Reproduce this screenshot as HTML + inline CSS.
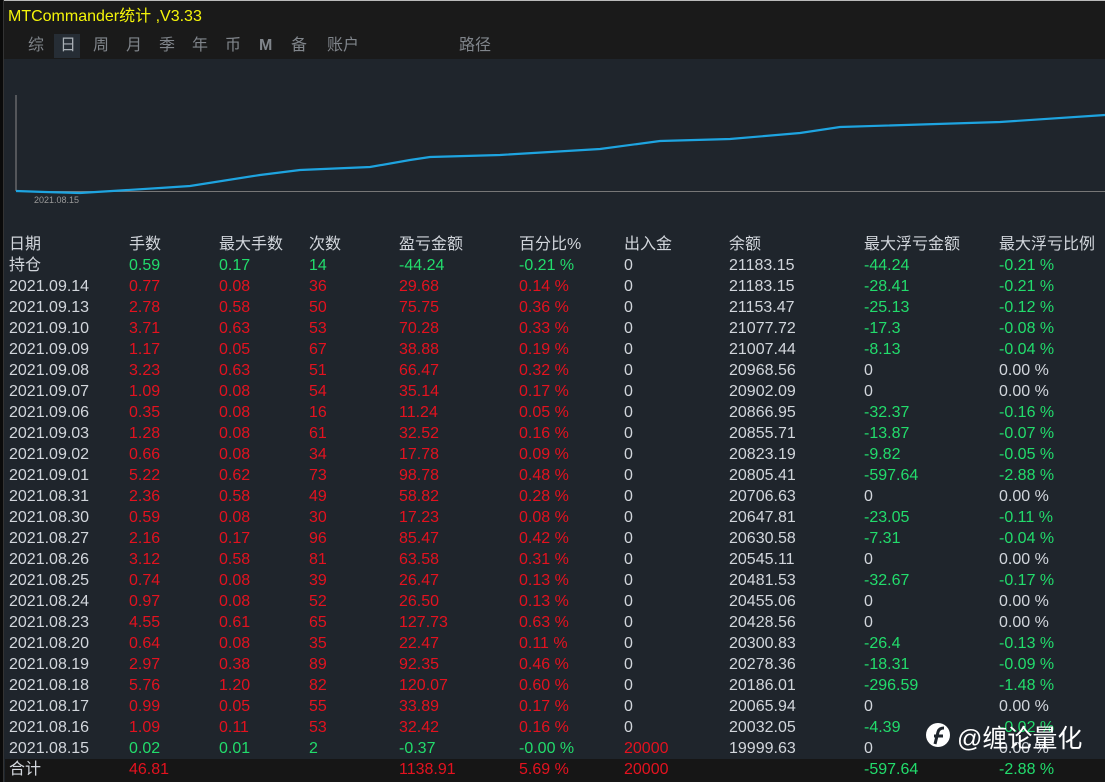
<!DOCTYPE html>
<html><head><meta charset="utf-8"><style>
*{margin:0;padding:0;box-sizing:border-box}
body{width:1105px;height:782px;overflow:hidden;background:#1f252c;font-family:"Liberation Sans","Noto Sans CJK SC",sans-serif;position:relative;color:#d2d6dc}
.top{position:absolute;left:0;top:0;width:1105px;height:59px;background:#1a1a1a;border-top:1px solid #bbb}
.lstrip{position:absolute;left:0;top:0;width:4px;height:782px;background:#0a0a0a;border-right:1px solid #333}
.title{position:absolute;left:8px;top:2px;color:#f5f50a;font-size:16px}
.tab{position:absolute;top:36px;height:20px;line-height:20px;color:#80858b;font-size:16px}
.sel{position:absolute;left:54px;top:34px;width:26px;height:24px;background:#262d35}
.r{position:absolute;left:0;height:21px;width:1105px;font-size:16px;line-height:21px}
.r span{position:absolute;top:0;white-space:nowrap}
.r span:nth-child(1){left:9px}.r span:nth-child(2){left:129px}.r span:nth-child(3){left:219px}.r span:nth-child(4){left:309px}.r span:nth-child(5){left:399px}.r span:nth-child(6){left:519px}.r span:nth-child(7){left:624px}.r span:nth-child(8){left:729px}.r span:nth-child(9){left:864px}.r span:nth-child(10){left:999px}
.R{color:#e3121f}.G{color:#22dc6c}.W{color:#d2d6dc}
.tot{background:#161616}
.wm{position:absolute;left:957px;top:719px;font-size:25px;color:#fff}
</style></head><body>
<div class="top"></div>
<div class="lstrip"></div>
<div class="title">MTCommander统计 ,V3.33</div>
<div class="sel"></div>
<span class="tab" style="left:28px">综</span><span class="tab" style="left:60px;color:#aab0b6">日</span><span class="tab" style="left:93px">周</span><span class="tab" style="left:126px">月</span><span class="tab" style="left:159px">季</span><span class="tab" style="left:192px">年</span><span class="tab" style="left:225px">币</span><span class="tab" style="left:259px;font-weight:bold">M</span><span class="tab" style="left:291px">备</span><span class="tab" style="left:327px">账户</span><span class="tab" style="left:459px">路径</span>
<svg style="position:absolute;left:0;top:0" width="1105" height="220">
<line x1="16" y1="95" x2="16" y2="191" stroke="#888" stroke-width="1"/>
<line x1="16" y1="191.5" x2="1105" y2="191.5" stroke="#777" stroke-width="1"/>
<polyline fill="none" stroke="#1ea4e0" stroke-width="2.2" points="16,191 45,192 80,193 160,188 190,186 260,175 300,170 370,167 410,160 430,157 500,155 600,149 660,141 730,139 800,133 840,127 1000,122 1105,115"/>
<text x="34" y="203" fill="#999" font-size="9" font-family="Liberation Sans">2021.08.15</text>
</svg>
<div class="r" style="top:234px"><span>日期</span><span>手数</span><span>最大手数</span><span>次数</span><span>盈亏金额</span><span>百分比%</span><span>出入金</span><span>余额</span><span>最大浮亏金额</span><span>最大浮亏比例</span></div>
<div class="r" style="top:255px"><span>持仓</span><span class="G">0.59</span><span class="G">0.17</span><span class="G">14</span><span class="G">-44.24</span><span class="G">-0.21 %</span><span>0</span><span>21183.15</span><span class="G">-44.24</span><span class="G">-0.21 %</span></div>
<div class="r" style="top:276px"><span>2021.09.14</span><span class="R">0.77</span><span class="R">0.08</span><span class="R">36</span><span class="R">29.68</span><span class="R">0.14 %</span><span>0</span><span>21183.15</span><span class="G">-28.41</span><span class="G">-0.21 %</span></div>
<div class="r" style="top:297px"><span>2021.09.13</span><span class="R">2.78</span><span class="R">0.58</span><span class="R">50</span><span class="R">75.75</span><span class="R">0.36 %</span><span>0</span><span>21153.47</span><span class="G">-25.13</span><span class="G">-0.12 %</span></div>
<div class="r" style="top:318px"><span>2021.09.10</span><span class="R">3.71</span><span class="R">0.63</span><span class="R">53</span><span class="R">70.28</span><span class="R">0.33 %</span><span>0</span><span>21077.72</span><span class="G">-17.3</span><span class="G">-0.08 %</span></div>
<div class="r" style="top:339px"><span>2021.09.09</span><span class="R">1.17</span><span class="R">0.05</span><span class="R">67</span><span class="R">38.88</span><span class="R">0.19 %</span><span>0</span><span>21007.44</span><span class="G">-8.13</span><span class="G">-0.04 %</span></div>
<div class="r" style="top:360px"><span>2021.09.08</span><span class="R">3.23</span><span class="R">0.63</span><span class="R">51</span><span class="R">66.47</span><span class="R">0.32 %</span><span>0</span><span>20968.56</span><span>0</span><span>0.00 %</span></div>
<div class="r" style="top:381px"><span>2021.09.07</span><span class="R">1.09</span><span class="R">0.08</span><span class="R">54</span><span class="R">35.14</span><span class="R">0.17 %</span><span>0</span><span>20902.09</span><span>0</span><span>0.00 %</span></div>
<div class="r" style="top:402px"><span>2021.09.06</span><span class="R">0.35</span><span class="R">0.08</span><span class="R">16</span><span class="R">11.24</span><span class="R">0.05 %</span><span>0</span><span>20866.95</span><span class="G">-32.37</span><span class="G">-0.16 %</span></div>
<div class="r" style="top:423px"><span>2021.09.03</span><span class="R">1.28</span><span class="R">0.08</span><span class="R">61</span><span class="R">32.52</span><span class="R">0.16 %</span><span>0</span><span>20855.71</span><span class="G">-13.87</span><span class="G">-0.07 %</span></div>
<div class="r" style="top:444px"><span>2021.09.02</span><span class="R">0.66</span><span class="R">0.08</span><span class="R">34</span><span class="R">17.78</span><span class="R">0.09 %</span><span>0</span><span>20823.19</span><span class="G">-9.82</span><span class="G">-0.05 %</span></div>
<div class="r" style="top:465px"><span>2021.09.01</span><span class="R">5.22</span><span class="R">0.62</span><span class="R">73</span><span class="R">98.78</span><span class="R">0.48 %</span><span>0</span><span>20805.41</span><span class="G">-597.64</span><span class="G">-2.88 %</span></div>
<div class="r" style="top:486px"><span>2021.08.31</span><span class="R">2.36</span><span class="R">0.58</span><span class="R">49</span><span class="R">58.82</span><span class="R">0.28 %</span><span>0</span><span>20706.63</span><span>0</span><span>0.00 %</span></div>
<div class="r" style="top:507px"><span>2021.08.30</span><span class="R">0.59</span><span class="R">0.08</span><span class="R">30</span><span class="R">17.23</span><span class="R">0.08 %</span><span>0</span><span>20647.81</span><span class="G">-23.05</span><span class="G">-0.11 %</span></div>
<div class="r" style="top:528px"><span>2021.08.27</span><span class="R">2.16</span><span class="R">0.17</span><span class="R">96</span><span class="R">85.47</span><span class="R">0.42 %</span><span>0</span><span>20630.58</span><span class="G">-7.31</span><span class="G">-0.04 %</span></div>
<div class="r" style="top:549px"><span>2021.08.26</span><span class="R">3.12</span><span class="R">0.58</span><span class="R">81</span><span class="R">63.58</span><span class="R">0.31 %</span><span>0</span><span>20545.11</span><span>0</span><span>0.00 %</span></div>
<div class="r" style="top:570px"><span>2021.08.25</span><span class="R">0.74</span><span class="R">0.08</span><span class="R">39</span><span class="R">26.47</span><span class="R">0.13 %</span><span>0</span><span>20481.53</span><span class="G">-32.67</span><span class="G">-0.17 %</span></div>
<div class="r" style="top:591px"><span>2021.08.24</span><span class="R">0.97</span><span class="R">0.08</span><span class="R">52</span><span class="R">26.50</span><span class="R">0.13 %</span><span>0</span><span>20455.06</span><span>0</span><span>0.00 %</span></div>
<div class="r" style="top:612px"><span>2021.08.23</span><span class="R">4.55</span><span class="R">0.61</span><span class="R">65</span><span class="R">127.73</span><span class="R">0.63 %</span><span>0</span><span>20428.56</span><span>0</span><span>0.00 %</span></div>
<div class="r" style="top:633px"><span>2021.08.20</span><span class="R">0.64</span><span class="R">0.08</span><span class="R">35</span><span class="R">22.47</span><span class="R">0.11 %</span><span>0</span><span>20300.83</span><span class="G">-26.4</span><span class="G">-0.13 %</span></div>
<div class="r" style="top:654px"><span>2021.08.19</span><span class="R">2.97</span><span class="R">0.38</span><span class="R">89</span><span class="R">92.35</span><span class="R">0.46 %</span><span>0</span><span>20278.36</span><span class="G">-18.31</span><span class="G">-0.09 %</span></div>
<div class="r" style="top:675px"><span>2021.08.18</span><span class="R">5.76</span><span class="R">1.20</span><span class="R">82</span><span class="R">120.07</span><span class="R">0.60 %</span><span>0</span><span>20186.01</span><span class="G">-296.59</span><span class="G">-1.48 %</span></div>
<div class="r" style="top:696px"><span>2021.08.17</span><span class="R">0.99</span><span class="R">0.05</span><span class="R">55</span><span class="R">33.89</span><span class="R">0.17 %</span><span>0</span><span>20065.94</span><span>0</span><span>0.00 %</span></div>
<div class="r" style="top:717px"><span>2021.08.16</span><span class="R">1.09</span><span class="R">0.11</span><span class="R">53</span><span class="R">32.42</span><span class="R">0.16 %</span><span>0</span><span>20032.05</span><span class="G">-4.39</span><span class="G">-0.02 %</span></div>
<div class="r" style="top:738px"><span>2021.08.15</span><span class="G">0.02</span><span class="G">0.01</span><span class="G">2</span><span class="G">-0.37</span><span class="G">-0.00 %</span><span class="R">20000</span><span>19999.63</span><span>0</span><span>0.00 %</span></div>
<div class="r tot" style="top:759px;height:23px;left:5px;width:1100px"><span style="left:4px">合计</span><span style="left:124px" class="R">46.81</span><span></span><span></span><span style="left:394px" class="R">1138.91</span><span style="left:514px" class="R">5.69 %</span><span style="left:619px" class="R">20000</span><span></span><span style="left:859px" class="G">-597.64</span><span style="left:994px" class="G">-2.88 %</span></div>
<svg style="position:absolute;left:925px;top:722px" width="28" height="28"><circle cx="13" cy="13" r="12" fill="#fff"/><path d="M10 22 L13 10 Q14 6 19 6 M9 14 H18" stroke="#1f252c" stroke-width="3" fill="none"/></svg>
<div class="wm">@缠论量化</div>
</body></html>
